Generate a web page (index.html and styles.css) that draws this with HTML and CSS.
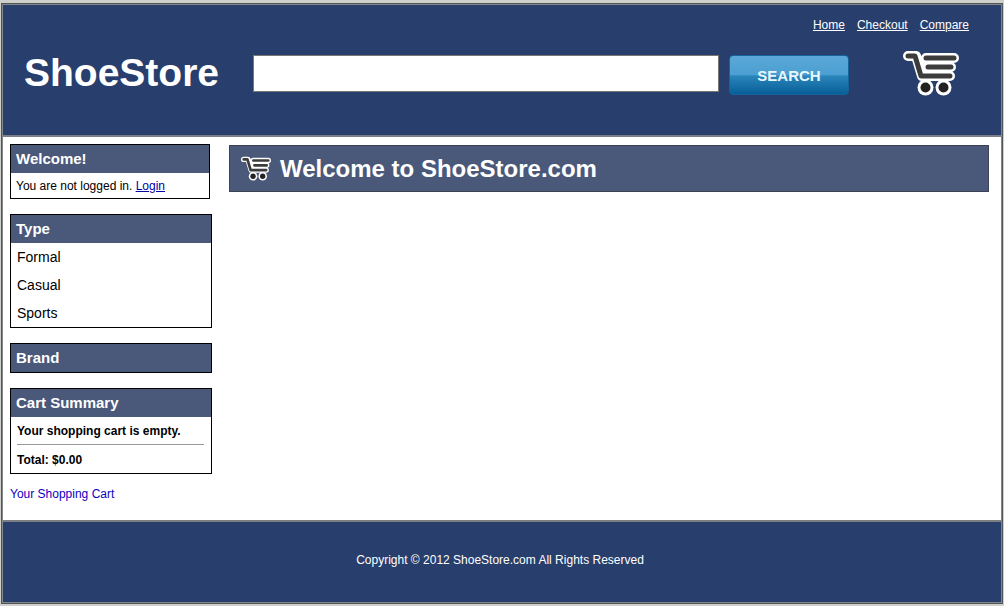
FILE: index.html
```html
<!DOCTYPE html>
<html lang="en">
<head>
<meta charset="utf-8">
<title>ShoeStore</title>
<link rel="stylesheet" href="styles.css">
</head>
<body>
<svg class="defs" width="0" height="0" aria-hidden="true">
  <symbol id="cart" viewBox="13 11 56 46">
    <g fill="none" stroke-linecap="round" stroke-linejoin="round">
      <path d="M18 17H26L32 37H60M36 19H64M38 28H61" stroke="#fff" stroke-width="10"/>
      <path d="M27 18H64L58 36H32Z" fill="#fff"/>
      <circle cx="35.500" cy="48.500" r="8" fill="#fff"/>
      <circle cx="53.500" cy="48.500" r="8" fill="#fff"/>
      <path d="M18 17H25L31 37H60" stroke="#3c3c3c" stroke-width="5"/>
      <path d="M36 19H64M38 28H61" stroke="#3c3c3c" stroke-width="5"/>
      <circle cx="35.500" cy="48.500" r="5" fill="#222"/>
      <circle cx="53.500" cy="48.500" r="5" fill="#222"/>
    </g>
  </symbol>
</svg>
<div class="page">
  <header class="header">
    <nav class="nav">
      <a href="#">Home</a>
      <a href="#">Checkout</a>
      <a href="#">Compare</a>
    </nav>
    <div class="masthead">
      <h1 class="brand">ShoeStore</h1>
      <form class="search">
        <input class="search-box" type="text" aria-label="Search">
        <button class="search-button" type="button">SEARCH</button>
      </form>
      <a class="cart-link" href="#" aria-label="Cart"><svg class="cart-large"><use href="#cart"/></svg></a>
    </div>
  </header>
  <div class="content">
    <aside class="sidebar">
      <section class="box box-login">
        <h2 class="box-title">Welcome!</h2>
        <p class="login">You are not logged in. <a href="#">Login</a></p>
      </section>
      <section class="box">
        <h2 class="box-title">Type</h2>
        <ul class="types">
          <li>Formal</li>
          <li>Casual</li>
          <li>Sports</li>
        </ul>
      </section>
      <section class="box">
        <h2 class="box-title">Brand</h2>
      </section>
      <section class="box">
        <h2 class="box-title">Cart Summary</h2>
        <div class="summary">
          <p>Your shopping cart is empty.</p>
          <hr class="rule">
          <p>Total: $0.00</p>
        </div>
      </section>
      <a class="your-cart" href="#">Your Shopping Cart</a>
    </aside>
    <main class="main">
      <h2 class="banner"><svg class="cart-small" aria-hidden="true"><use href="#cart"/></svg>Welcome to ShoeStore.com</h2>
    </main>
  </div>
  <footer class="footer">Copyright © 2012 ShoeStore.com All Rights Reserved</footer>
</div>
</body>
</html>
```
FILE: styles.css
```css
* {
  box-sizing: border-box;
}

body {
  margin: 0;
  padding: 3px 1px 2px;
  background: #cfcfcb;
  font: 12px/16px "Liberation Sans", Arial, sans-serif;
  color: #000;
}

h1, h2, p, ul {
  margin: 0;
  padding: 0;
}

.defs {
  position: absolute;
}

.page {
  border: 1px solid #505558;
  background: #fff;
  outline: 1px solid #84878a;
  outline-offset: -2px;
  padding: 1px;
}

.header {
  padding: 12px 32px 34px 21px;
  background: #283e6c;
  border-bottom: 2px solid #7b7f8a;
  color: #fff;
}

.nav {
  display: flex;
  justify-content: flex-end;
  gap: 12px;
}

.nav a {
  color: #fff;
}

.masthead {
  display: flex;
  align-items: center;
  margin-top: 12px;
  padding-right: 10px;
}

.brand {
  width: 229px;
  font-size: 39px;
  line-height: 56px;
}

.search {
  flex: 1;
  display: flex;
  align-items: flex-start;
  gap: 10px;
  padding-top: 4px;
}

.search-box {
  flex: 1;
  min-width: 0;
  height: 37px;
  padding: 0 8px;
  border: 1px solid #777;
  background: #fff;
  font: 20px "Liberation Sans", Arial, sans-serif;
}

.search-button {
  width: 120px;
  height: 40px;
  border: 1px solid #17649c;
  border-radius: 4px;
  background: linear-gradient(#5ba8d8, #4b9fd1 50%, #2b86bb 52%, #075f98);
  color: #e8f8ff;
  font: bold 15px "Liberation Sans", Arial, sans-serif;
}

.cart-link {
  display: block;
  margin-left: 54px;
}

.cart-large {
  display: block;
  width: 56px;
  height: 46px;
}

.content {
  display: flex;
  gap: 17px;
  padding: 7px 12px 18px 7px;
}

.sidebar {
  width: 202px;
}

.box {
  margin-bottom: 15px;
  border: 1px solid #000;
}

.box-login {
  margin-right: 2px;
}

.box-title {
  padding: 0 5px;
  background: #4a5879;
  color: #fff;
  font-size: 15px;
  line-height: 28px;
}

.login {
  padding: 5px 5px 4px;
}

.login a {
  color: #0000a8;
}

.types {
  list-style: none;
  padding: 0 6px;
  font-size: 14px;
  line-height: 28px;
}

.summary {
  padding: 6px 7px 5px 6px;
  font-weight: bold;
}

.rule {
  margin: 5px 0 7px;
  border: 0;
  border-top: 1px solid #999;
}

.your-cart {
  display: block;
  margin-top: -3px;
  color: #1000c0;
  text-decoration: none;
}

.main {
  flex: 1;
  padding-top: 1px;
}

.banner {
  display: flex;
  align-items: center;
  gap: 9px;
  height: 47px;
  padding: 0 11px;
  border: 1px solid #3d4353;
  background: #4a5879;
  color: #fff;
  font-size: 24px;
}

.cart-small {
  width: 30px;
  height: 25px;
}

.footer {
  padding: 30px 4px 34px 0;
  border-top: 2px solid #7b7f80;
  background: #283e6c;
  color: #fff;
  text-align: center;
}
```
